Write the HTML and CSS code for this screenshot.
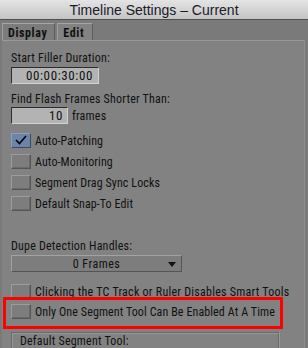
FILE: index.html
```html
<!DOCTYPE html>
<html>
<head>
  <title>Timeline Settings - Current</title>
  <link rel="stylesheet" href="styles.css">
</head>
<body>
  <div class="window">
    <div class="titlebar">Timeline Settings – Current</div>

    <!-- tab strip -->
    <div class="tabs">
      <div class="tab">Display</div>
      <div class="tab selected">Edit</div>
    </div>

    <div class="panel">
      <div class="label first">Start Filler Duration:</div>
      <div class="field tc">00:00:30:00</div>

      <div class="label">Find Flash Frames Shorter Than:</div>
      <div class="inline">
        <div class="field short">10</div>
        <span class="unit">frames</span>
      </div>

      <div class="checks">
        <div class="check-row">
          <span class="box checked">
            <svg viewBox="0 0 20 15" width="20" height="15">
              <path d="M5,7 L8.5,10.5 L15,3" fill="none" stroke="#000" stroke-width="1.6" />
            </svg>
          </span>
          <span>Auto-Patching</span>
        </div>
        <div class="check-row">
          <span class="box"></span>
          <span>Auto-Monitoring</span>
        </div>
        <div class="check-row">
          <span class="box"></span>
          <span>Segment Drag Sync Locks</span>
        </div>
        <div class="check-row">
          <span class="box"></span>
          <span>Default Snap-To Edit</span>
        </div>
      </div>

      <div class="label dupe">Dupe Detection Handles:</div>
      <div class="dropdown">
        <span>0 Frames</span>
        <span class="arrow"></span>
      </div>

      <div class="check-row clicking">
        <span class="box"></span>
        <span>Clicking the TC Track or Ruler Disables Smart Tools</span>
      </div>
      <div class="check-row marked">
        <span class="box"></span>
        <span>Only One Segment Tool Can Be Enabled At A Time</span>
        <!-- red annotation frame -->
        <span class="highlight"></span>
      </div>

      <div class="group">
        <div class="group-title">Default Segment Tool:</div>
      </div>
    </div>
  </div>
</body>
</html>
```

FILE: styles.css
```css
/* whole dialog */
html, body {
  margin: 0;
  padding: 0;
}
body {
  width: 308px;
  height: 348px;
  overflow: hidden;
  background-color: #7a7a7a;
  font-family: "Roboto Condensed", "DejaVu Sans Condensed", sans-serif;
  font-size: 12px;
  color: #111;
}
.window {
  display: flex;
  flex-direction: column;
  height: 348px;
  overflow: hidden;
}
/* title bar */
.titlebar {
  flex: none;
  height: 20px;
  line-height: 20px;
  text-align: center;
  font-family: "Liberation Sans", Arial, sans-serif;
  font-size: 14px;
  color: #1a1a2a;
  background: linear-gradient(#e4e4e4, #c4c4c4);
  border-bottom: 1px solid #505050;
  box-sizing: border-box;
}
/* tabs */
.tabs {
  flex: none;
  display: flex;
  gap: 2px;
  padding: 3px 0 0 2px;
  height: 20px;
  box-sizing: border-box;
}
.tab {
  height: 17px;
  line-height: 18px;
  padding: 0 7px 0 5px;
  font-weight: bold;
  font-size: 12px;
  letter-spacing: 0.6px;
  color: #111;
  background-color: #7c7c7c;
  border: 1px solid #5e5e5e;
  border-top-color: #a6a6a6;
  border-left-color: #a0a0a0;
  border-bottom: none;
  box-sizing: border-box;
}
.tab.selected {
  background-color: #838383;
  width: 36px;
  padding: 0 0 0 5px;
}
/* panel */
.panel {
  flex: 1;
  margin: 0 3px 0 2px;
  padding: 0 9px;
  background-color: #828282;
  border-top: 1px solid #989898;
  border-right: 1px solid #8c8c8c;
  display: flex;
  flex-direction: column;
  overflow: hidden;
}
.label {
  height: 14px;
  line-height: 14px;
  letter-spacing: 0.2px;
}
.label.first {
  margin-top: 10px;
}
.label + .field {
  margin-top: 2px;
}
.label + .inline {
  margin-top: 1px;
}
.field {
  height: 17px;
  line-height: 16px;
  background-color: #b3b3b3;
  border: 1px solid #d2d2d2;
  border-top-color: #2e2e2e;
  border-left-color: #2e2e2e;
  box-sizing: border-box;
  text-align: right;
  font-size: 13px;
  letter-spacing: 0.6px;
}
.field.tc {
  width: 88px;
  padding-right: 5px;
  margin-bottom: 8px;
}
.inline {
  display: flex;
  align-items: center;
  gap: 4px;
}
.field.short {
  width: 57px;
  padding-right: 4px;
}
.unit {
  letter-spacing: 0.2px;
}
/* check boxes */
.checks {
  margin-top: 9px;
  display: flex;
  flex-direction: column;
  gap: 6px;
}
.check-row {
  flex: none;
  display: flex;
  align-items: center;
  gap: 4px;
  height: 15px;
  letter-spacing: 0.1px;
  white-space: nowrap;
}
.box {
  width: 20px;
  height: 15px;
  flex: none;
  box-sizing: border-box;
  background-color: #7d7d7d;
  border: 1px solid #555;
  border-top-color: #9c9c9c;
  border-left-color: #9c9c9c;
  box-shadow: inset -1px -1px 0 #6a6a6a;
}
.box.checked {
  background-color: #6b84a8;
  border-color: #8aa0c0 #3c4a60 #3c4a60 #8aa0c0;
  box-shadow: none;
}
.box svg {
  display: block;
  margin: -1px;
}
/* dupe detection */
.label.dupe {
  margin-top: 28px;
}
.dropdown {
  flex: none;
  margin-top: 2px;
  width: 171px;
  height: 17px;
  box-sizing: border-box;
  position: relative;
  display: flex;
  align-items: center;
  justify-content: center;
  background-color: #7d7d7d;
  border: 1px solid #555;
  border-top-color: #a2a2a2;
  border-left-color: #a2a2a2;
  letter-spacing: 0.5px;
}
.arrow {
  position: absolute;
  right: 5px;
  top: 6px;
  width: 0;
  height: 0;
  border-left: 4px solid transparent;
  border-right: 4px solid transparent;
  border-top: 5px solid #111;
}
.check-row.clicking {
  margin-top: 12px;
  letter-spacing: 0.25px;
}
.check-row.marked {
  margin-top: 5px;
  position: relative;
}
.highlight {
  position: absolute;
  left: -8px;
  top: -7px;
  width: 280px;
  height: 32px;
  box-sizing: border-box;
  border: 3px solid #ff0000;
}
/* bottom group */
.group {
  flex: none;
  margin-top: 13px;
  width: 268px;
  height: 20px;
  box-sizing: border-box;
  border: 1px solid #6a6a6a;
  border-bottom: none;
  box-shadow: inset 1px 1px 0 #969696, 1px 0 0 #9a9a9a;
  padding: 1px 0 0 8px;
}
.group-title {
  letter-spacing: 0.2px;
}
```
